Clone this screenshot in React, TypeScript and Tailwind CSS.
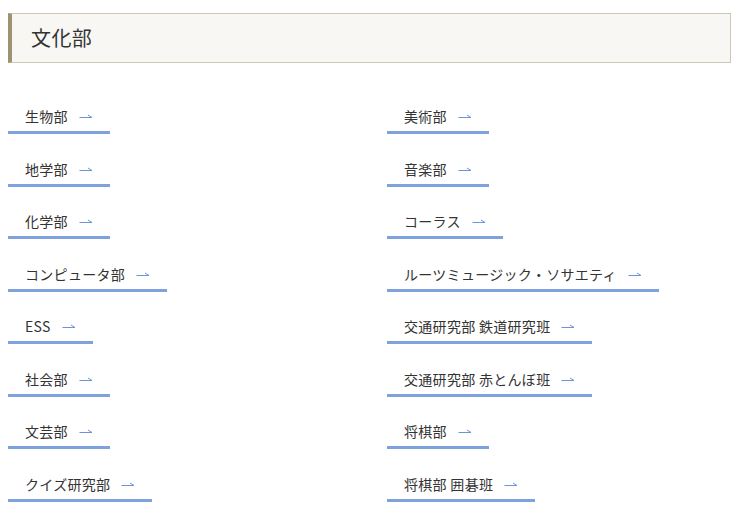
const left = ['生物部', '地学部', '化学部', 'コンピュータ部', 'ESS', '社会部', '文芸部', 'クイズ研究部']
const right = ['美術部', '音楽部', 'コーラス', 'ルーツミュージック・ソサエティ', '交通研究部 鉄道研究班', '交通研究部 赤とんぼ班', '将棋部', '将棋部 囲碁班']

function Arrow() {
  return (
    <svg width="14" height="7" viewBox="0 0 14 7" className="ml-[11px] shrink-0">
      <path d="M0.5 4.5 H13 M9 2 L13 4.5" fill="none" stroke="#6f93d6" strokeWidth="1" />
    </svg>
  )
}

function ClubLink({ name }: { name: string }) {
  return (
    <div className="flex">
      <a href="#" className="flex items-center pl-[17px] pr-[17px] pb-[4px] border-b-[3px] border-[#7ea2de] text-[14px] leading-[21px] tracking-[0.3px] text-[#333]">
        <span>{name}</span>
        <Arrow />
      </a>
    </div>
  )
}

export default function App() {
  return (
    <div className="w-[740px] h-[517px] bg-white pl-[8px] pr-[9px] pt-[13px] overflow-hidden" style={{ fontFamily: '"Noto Sans CJK JP", "Noto Sans", sans-serif' }}>
      <div className="h-[50px] flex items-center bg-[#f8f7f4] border border-[#cdc7b4] border-l-[4px] border-l-[#9d9372] pl-[19px]">
        <h2 className="text-[20px] leading-none text-[#333] tracking-[0.02em]">文化部</h2>
      </div>
      <div className="mt-[43px] grid grid-cols-[344px_1fr] gap-x-[35px]">
        <div className="flex flex-col gap-y-[24.5px]">
          {left.map(n => <ClubLink key={n} name={n} />)}
        </div>
        <div className="flex flex-col gap-y-[24.5px]">
          {right.map(n => <ClubLink key={n} name={n} />)}
        </div>
      </div>
    </div>
  )
}
